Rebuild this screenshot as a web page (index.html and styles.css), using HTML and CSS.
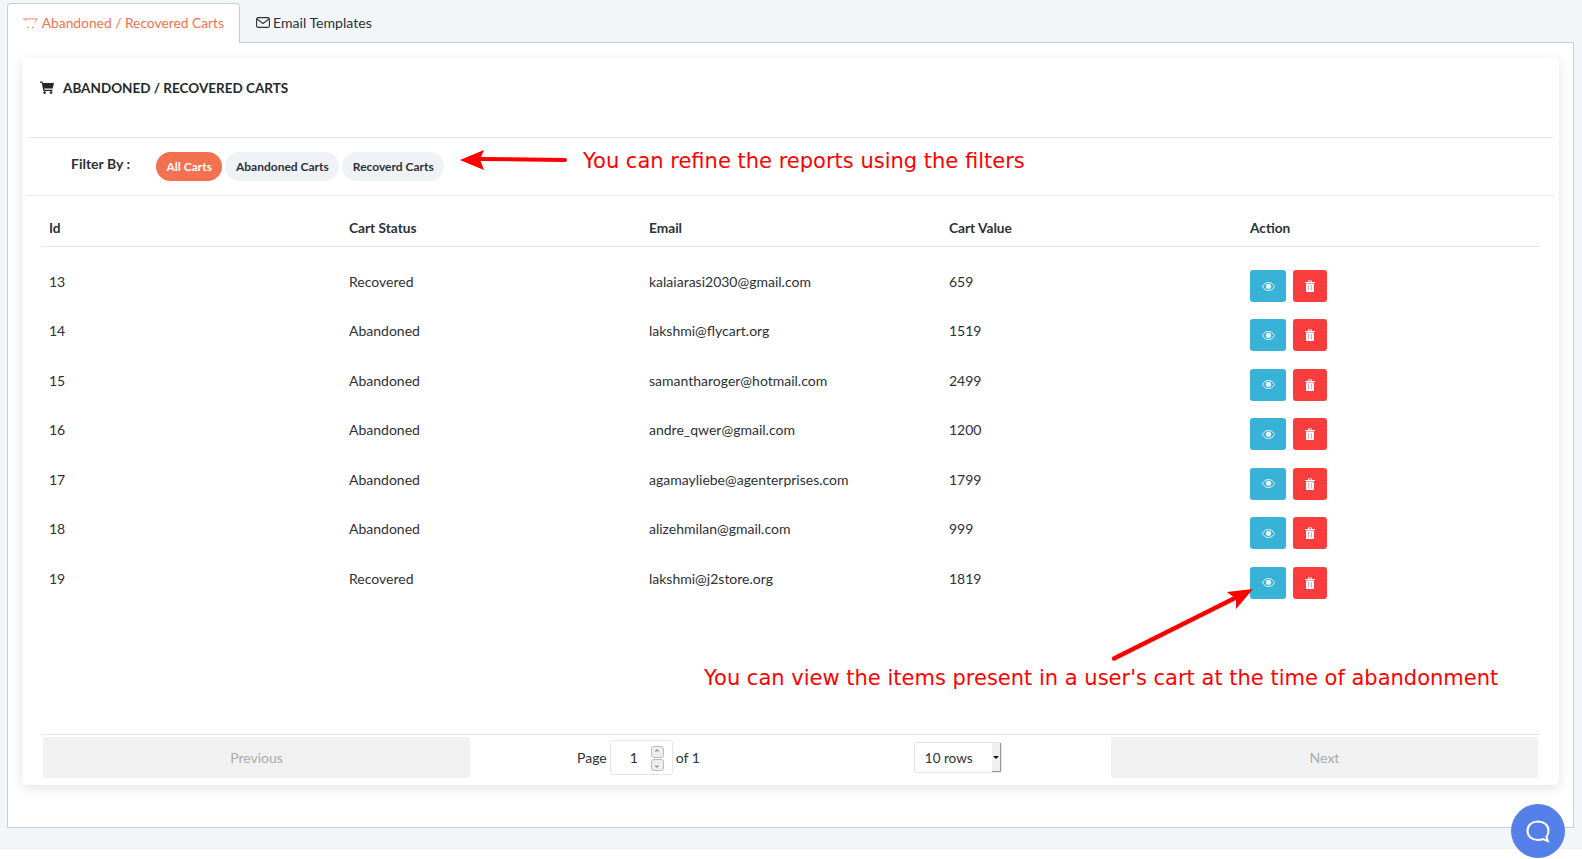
FILE: index.html
```html
<!DOCTYPE html>
<html lang="en">
<head>
    <meta charset="UTF-8">
    <title>Abandoned / Recovered Carts</title>
    <link rel="stylesheet" href="styles.css">
</head>
<body>
    <div class="page">
        <div class="tabs">
            <div class="tab active">
                <svg class="tabIcon" width="18" height="14" viewBox="0 0 18 14" fill="none" stroke="#f4714f" stroke-width="1"><path d="M0 2h17.500M2 2.500l2.500 1.500M17.500 2l-3 4"/><circle cx="6" cy="12.500" r="1" fill="#f4714f" stroke="none"/><circle cx="12" cy="12.500" r="1" fill="#f4714f" stroke="none"/></svg>
                Abandoned / Recovered Carts
            </div>
            <div class="tab">
                <svg class="tabIcon" width="14" height="11" viewBox="0 0 14 11" fill="none" stroke="#2c3138" stroke-width="1.1"><rect x="0.6" y="0.6" width="12.8" height="9.8" rx="1.5"/><path d="M1 2l6 4.500L13 2"/></svg>
                Email Templates
            </div>
        </div>

        <div class="panel">
            <div class="card">
                <div class="cardTitle">
                    <svg width="14" height="13" viewBox="0 0 14 13" fill="#23282e"><path d="M0 0.500h2.500l0.400 1.500H14l-1.300 5.500H4.200l0.300 1.300H12.500v1.200H3.400L1.700 1.700H0z"/><circle cx="4.600" cy="11.600" r="1.300"/><circle cx="11" cy="11.600" r="1.300"/></svg>
                    ABANDONED / RECOVERED CARTS
                </div>

                <div class="filterBar">
                    <span class="filterLabel">Filter By :</span>
                    <div class="pills">
                        <span class="pill selected">All Carts</span>
                        <span class="pill">Abandoned Carts</span>
                        <span class="pill">Recoverd Carts</span>
                    </div>
                </div>

                <div class="cartTable">
                    <div class="row head">
                        <div>Id</div><div>Cart Status</div><div>Email</div><div>Cart Value</div><div class="actionCol">Action</div>
                    </div>
                    <div class="rows">
                        <div class="row">
                            <div>13</div><div>Recovered</div><div>kalaiarasi2030@gmail.com</div><div>659</div>
                            <div class="actions">
                                <span class="btn view"><svg width="13" height="9" viewBox="0 0 12 9"><path d="M0 4.500C1.500 1.500 4 0.500 6 0.500s4.500 1 6 4c-1.500 3-4 4-6 4s-4.500-1-6-4z" fill="none" stroke="#e6f6fb"/><circle cx="6" cy="4.300" r="2.600" fill="#e6f6fb"/></svg></span>
                                <span class="btn del"><svg width="10" height="12" viewBox="0 0 10 12"><path d="M0 2h10v1H0zM3 2V0.500h4V2H6V1.300H4V2z" fill="#fff"/><path d="M1 3.500h8V12H1z" fill="#fff"/><path d="M3 5h1v5.500H3zM6 5h1v5.500H6z" fill="#f9a0b4"/></svg></span>
                            </div>
                        </div>
                        <div class="row">
                            <div>14</div><div>Abandoned</div><div>lakshmi@flycart.org</div><div>1519</div>
                            <div class="actions">
                                <span class="btn view"><svg width="13" height="9" viewBox="0 0 12 9"><path d="M0 4.500C1.500 1.500 4 0.500 6 0.500s4.500 1 6 4c-1.500 3-4 4-6 4s-4.500-1-6-4z" fill="none" stroke="#e6f6fb"/><circle cx="6" cy="4.300" r="2.600" fill="#e6f6fb"/></svg></span>
                                <span class="btn del"><svg width="10" height="12" viewBox="0 0 10 12"><path d="M0 2h10v1H0zM3 2V0.500h4V2H6V1.300H4V2z" fill="#fff"/><path d="M1 3.500h8V12H1z" fill="#fff"/><path d="M3 5h1v5.500H3zM6 5h1v5.500H6z" fill="#f9a0b4"/></svg></span>
                            </div>
                        </div>
                        <div class="row">
                            <div>15</div><div>Abandoned</div><div>samantharoger@hotmail.com</div><div>2499</div>
                            <div class="actions">
                                <span class="btn view"><svg width="13" height="9" viewBox="0 0 12 9"><path d="M0 4.500C1.500 1.500 4 0.500 6 0.500s4.500 1 6 4c-1.500 3-4 4-6 4s-4.500-1-6-4z" fill="none" stroke="#e6f6fb"/><circle cx="6" cy="4.300" r="2.600" fill="#e6f6fb"/></svg></span>
                                <span class="btn del"><svg width="10" height="12" viewBox="0 0 10 12"><path d="M0 2h10v1H0zM3 2V0.500h4V2H6V1.300H4V2z" fill="#fff"/><path d="M1 3.500h8V12H1z" fill="#fff"/><path d="M3 5h1v5.500H3zM6 5h1v5.500H6z" fill="#f9a0b4"/></svg></span>
                            </div>
                        </div>
                        <div class="row">
                            <div>16</div><div>Abandoned</div><div>andre_qwer@gmail.com</div><div>1200</div>
                            <div class="actions">
                                <span class="btn view"><svg width="13" height="9" viewBox="0 0 12 9"><path d="M0 4.500C1.500 1.500 4 0.500 6 0.500s4.500 1 6 4c-1.500 3-4 4-6 4s-4.500-1-6-4z" fill="none" stroke="#e6f6fb"/><circle cx="6" cy="4.300" r="2.600" fill="#e6f6fb"/></svg></span>
                                <span class="btn del"><svg width="10" height="12" viewBox="0 0 10 12"><path d="M0 2h10v1H0zM3 2V0.500h4V2H6V1.300H4V2z" fill="#fff"/><path d="M1 3.500h8V12H1z" fill="#fff"/><path d="M3 5h1v5.500H3zM6 5h1v5.500H6z" fill="#f9a0b4"/></svg></span>
                            </div>
                        </div>
                        <div class="row">
                            <div>17</div><div>Abandoned</div><div>agamayliebe@agenterprises.com</div><div>1799</div>
                            <div class="actions">
                                <span class="btn view"><svg width="13" height="9" viewBox="0 0 12 9"><path d="M0 4.500C1.500 1.500 4 0.500 6 0.500s4.500 1 6 4c-1.500 3-4 4-6 4s-4.500-1-6-4z" fill="none" stroke="#e6f6fb"/><circle cx="6" cy="4.300" r="2.600" fill="#e6f6fb"/></svg></span>
                                <span class="btn del"><svg width="10" height="12" viewBox="0 0 10 12"><path d="M0 2h10v1H0zM3 2V0.500h4V2H6V1.300H4V2z" fill="#fff"/><path d="M1 3.500h8V12H1z" fill="#fff"/><path d="M3 5h1v5.500H3zM6 5h1v5.500H6z" fill="#f9a0b4"/></svg></span>
                            </div>
                        </div>
                        <div class="row">
                            <div>18</div><div>Abandoned</div><div>alizehmilan@gmail.com</div><div>999</div>
                            <div class="actions">
                                <span class="btn view"><svg width="13" height="9" viewBox="0 0 12 9"><path d="M0 4.500C1.500 1.500 4 0.500 6 0.500s4.500 1 6 4c-1.500 3-4 4-6 4s-4.500-1-6-4z" fill="none" stroke="#e6f6fb"/><circle cx="6" cy="4.300" r="2.600" fill="#e6f6fb"/></svg></span>
                                <span class="btn del"><svg width="10" height="12" viewBox="0 0 10 12"><path d="M0 2h10v1H0zM3 2V0.500h4V2H6V1.300H4V2z" fill="#fff"/><path d="M1 3.500h8V12H1z" fill="#fff"/><path d="M3 5h1v5.500H3zM6 5h1v5.500H6z" fill="#f9a0b4"/></svg></span>
                            </div>
                        </div>
                        <div class="row">
                            <div>19</div><div>Recovered</div><div>lakshmi@j2store.org</div><div>1819</div>
                            <div class="actions">
                                <span class="btn view"><svg width="13" height="9" viewBox="0 0 12 9"><path d="M0 4.500C1.500 1.500 4 0.500 6 0.500s4.500 1 6 4c-1.500 3-4 4-6 4s-4.500-1-6-4z" fill="none" stroke="#e6f6fb"/><circle cx="6" cy="4.300" r="2.600" fill="#e6f6fb"/></svg></span>
                                <span class="btn del"><svg width="10" height="12" viewBox="0 0 10 12"><path d="M0 2h10v1H0zM3 2V0.500h4V2H6V1.300H4V2z" fill="#fff"/><path d="M1 3.500h8V12H1z" fill="#fff"/><path d="M3 5h1v5.500H3zM6 5h1v5.500H6z" fill="#f9a0b4"/></svg></span>
                            </div>
                        </div>
                    </div>

                    <div class="pagination">
                        <div class="pageBtn">Previous</div>
                        <div class="pageInfo">
                            <div class="pageCenter">
                                <span>Page</span>
                                <span class="pageInput">
                                    1
                                    <span class="spinner"><i>&#8963;</i><i class="down">&#8963;</i></span>
                                </span>
                                <span>of 1</span>
                            </div>
                            <div class="rowsSelect">10 rows<span class="caret"></span></div>
                        </div>
                        <div class="pageBtn">Next</div>
                    </div>
                </div>
            </div>
        </div>
    </div>

    <!-- annotations drawn over the screenshot -->
    <svg class="arrows" width="1582" height="859" viewBox="0 0 1582 859">
        <path d="M565 160L478 159" stroke="#f00" stroke-width="4" stroke-linecap="round"/>
        <path d="M460 160L484 150L480 159.500L484 170z" fill="#f00"/>
        <path d="M1114 658.500L1235 598" stroke="#f00" stroke-width="4.500" stroke-linecap="round"/>
        <path d="M1253 589L1236 609L1236 599L1227 592z" fill="#f00"/>
    </svg>
    <div class="note noteFilters">You can refine the reports using the filters</div>
    <div class="note noteView">You can view the items present in a user's cart at the time of abandonment</div>

    <div class="chatBtn">
        <svg width="26" height="25" viewBox="0 0 26 25" fill="none" stroke="#fff" stroke-width="2"><path d="M13 2.500c6 0 10.500 3.800 10.500 9.300 0 2.400-0.700 4.300-2 5.800l1.200 4.400-4.600-1.900c-1.500 0.600-3.200 0.900-5.100 0.900-6 0-10.500-3.700-10.500-9.200S7 2.500 13 2.500z"/></svg>
    </div>
</body>
</html>
```

FILE: styles.css
```css
html, body {
    margin: 0;
    padding: 0;
    background-color: #fff;
}

body {
    font-family: "Lato", "Open Sans", sans-serif;
    font-size: 14px;
    color: #2c3138;
    height: 859px;
    overflow: hidden;
    position: relative;
}

.page {
    background-color: #f3f6f9;
    height: 849px;
    padding: 3px 8px 0 7px;
    box-sizing: border-box;
    border-bottom: 1px solid #eceef1;
}

/* Tabs */
.tabs {
    display: flex;
    height: 40px;
    position: relative;
    z-index: 1;
}

.tab {
    display: flex;
    align-items: center;
    gap: 3px;
    padding: 0 15px 2px 15px;
    box-sizing: border-box;
    height: 40px;
    font-size: 14.1px;
    border: 1px solid transparent;
    border-bottom: 0;
    white-space: nowrap;
}

.tab.active {
    width: 233px;
    gap: 4px;
    font-size: 13.8px;
    color: #f4714f;
    background-color: #fff;
    border-color: #c8ced6;
    border-radius: 4px 4px 0 0;
}

.panel {
    height: 786px;
    box-sizing: border-box;
    margin-top: -1px;
    padding: 15px 14px 0 14px;
    background-color: #fff;
    border: 1px solid #c8ced6;
}

/* Card */
.card {
    height: 727px;
    box-sizing: border-box;
    padding: 0 5px;
    background-color: #fff;
    border-radius: 5px;
    box-shadow: 0 3px 12px rgba(40, 50, 60, 0.14);
}

.cardTitle {
    display: flex;
    align-items: center;
    gap: 9px;
    height: 80px;
    padding: 0 0 20px 13px;
    font-size: 13.5px;
    font-weight: 700;
    color: #23282e;
    border-bottom: 1px solid #e6e8ea;
    box-sizing: border-box;
}

.filterBar {
    display: flex;
    height: 58px;
    box-sizing: border-box;
    border-bottom: 1px solid #e6e8ea;
}

.filterLabel {
    margin: 17px 26px 0 44px;
    font-weight: 700;
    font-size: 14px;
}

.pills {
    display: flex;
    gap: 3px;
    margin-top: 14px;
}

.pill {
    height: 29px;
    line-height: 30px;
    padding: 0 10.5px;
    border-radius: 15px;
    font-size: 12px;
    font-weight: 700;
    background-color: #eff2f6;
}

.pill.selected {
    color: #fff;
    background-color: #f4714f;
}

/* Table */
.cartTable {
    margin: 0 14px;
}

.row {
    display: grid;
    grid-template-columns: repeat(5, 300px);
    height: 49.45px;
    box-sizing: border-box;
    padding-top: 14px;
}

.row > div {
    padding-left: 8px;
}

.row.head {
    height: 51px;
    padding-top: 23px;
    font-size: 13.7px;
    font-weight: 700;
    border-bottom: 1px solid #e6e8ea;
}

.row > .actionCol,
.row > .actions {
    padding-left: 9px;
}

.rows {
    height: 487px;
    padding-top: 12px;
    box-sizing: border-box;
}

.actions {
    display: flex;
    gap: 7px;
    margin-top: -3px;
}

.btn {
    display: flex;
    align-items: center;
    justify-content: center;
    height: 32px;
    border-radius: 3px;
}

.btn.view {
    width: 36px;
    background-color: #39b2d7;
}

.btn.del {
    width: 34px;
    background-color: #f93c3c;
}

/* Pagination */
.pagination {
    display: flex;
    gap: 8px;
    padding: 2px;
    height: 50px;
    box-sizing: border-box;
    border-top: 1px solid #e6e8ea;
}

.pageBtn {
    width: 427px;
    height: 41px;
    line-height: 41px;
    text-align: center;
    color: #a9abad;
    background-color: #f1f1f1;
    border-radius: 3px;
}

.pageInfo {
    flex: 1;
    display: flex;
    align-items: center;
    height: 41px;
}

.pageCenter {
    display: flex;
    align-items: center;
    gap: 3px;
    margin-left: 99px;
}

.pageInput {
    position: relative;
    display: block;
    width: 63px;
    height: 35px;
    line-height: 33px;
    box-sizing: border-box;
    padding-left: 19px;
    border: 1px solid #e4e6e8;
    border-radius: 3px;
}

.spinner {
    position: absolute;
    top: 5px;
    right: 8px;
    display: flex;
    flex-direction: column;
    gap: 1px;
}

.spinner i {
    display: block;
    width: 11px;
    height: 10px;
    font-style: normal;
    font-size: 9px;
    line-height: 12px;
    text-align: center;
    color: #555;
    background-color: #eee;
    border: 1px solid #bbb;
    border-radius: 3px;
}

.spinner i.down {
    transform: scaleY(-1);
}

.rowsSelect {
    position: relative;
    width: 88px;
    height: 31px;
    line-height: 30px;
    font-size: 13.5px;
    box-sizing: border-box;
    padding-left: 10px;
    margin-left: 214px;
    border: 1px solid #e4e6e8;
    border-radius: 3px;
}

.caret {
    position: absolute;
    top: 0;
    right: 0;
    width: 9px;
    height: 29px;
    background-color: #efefef;
    border-right: 1px solid #999;
    border-bottom: 1px solid #999;
    box-sizing: border-box;
}

.caret::after {
    content: "";
    position: absolute;
    top: 13px;
    left: 1px;
    border: 3px solid transparent;
    border-top: 3px solid #111;
}

/* Annotations */
.arrows {
    position: absolute;
    top: 0;
    left: 0;
}

.note {
    position: absolute;
    font-family: "DejaVu Sans", sans-serif;
    font-size: 21px;
    color: #f00;
    white-space: nowrap;
}

.noteFilters {
    left: 583px;
    top: 149px;
}

.noteView {
    left: 704px;
    top: 666px;
}

.chatBtn {
    position: absolute;
    left: 1511px;
    top: 804px;
    width: 54px;
    height: 54px;
    display: flex;
    align-items: center;
    justify-content: center;
    border-radius: 50%;
    background-color: #5580ea;
}
```
